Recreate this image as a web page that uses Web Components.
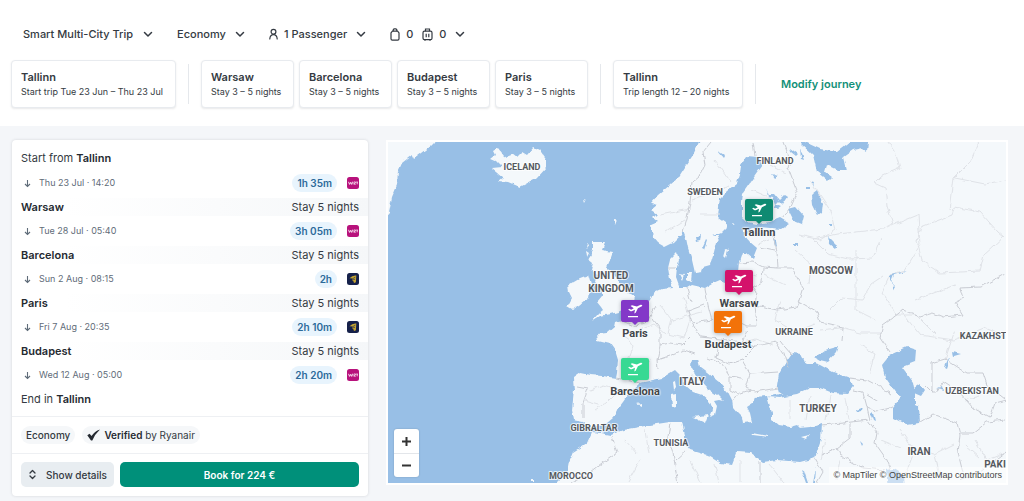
<!DOCTYPE html>
<html lang="en">
<head>
<meta charset="utf-8">
<meta name="viewport" content="width=device-width, initial-scale=1">
<title>Multi-city trip</title>
<style>
  html { height: 100%; }
  body {
    margin: 0; min-height: 100%; background: #f4f6f9; color: #343a42;
    font-family: Inter, "Open Sans", sans-serif; font-size: 11px; line-height: 16px;
  }
</style>
</head>
<body>
<trip-page></trip-page>

<template id="trip-page">
  <style>
    :host { display: block; }
    header { background: #fff; padding: 24px 12px 18px 11px; }
    .options { display: flex; align-items: center; gap: 24px; height: 20px; padding-left: 12px; }
    .route { display: flex; align-items: center; gap: 12px; margin-top: 16px; }
    .stops { display: flex; gap: 5px; }
    hr { width: 1px; height: 40px; margin: 0; border: 0; background: #e5e8ec; }
    .route a { margin-left: 13px; color: #129078; font-size: 11px; font-weight: 600; text-decoration: none; }
    main { display: grid; grid-template-columns: 356px minmax(0, 1fr); gap: 18px; align-items: start; padding: 14px 16px 5px 12px; }
  </style>
  <header>
    <form class="options">
      <option-select label="Trip type" options="Smart Multi-City Trip|One way|Return"></option-select>
      <option-select label="Cabin class" options="Economy|Business|First"></option-select>
      <option-menu label="Passengers"><ui-icon name="person"></ui-icon>1 Passenger</option-menu>
      <option-menu label="Bags"><ui-icon name="bag"></ui-icon>0<ui-icon name="case"></ui-icon>0</option-menu>
    </form>
    <nav class="route" aria-label="Journey">
      <stop-card style="--w:165px" city="Tallinn">Start trip Tue 23 Jun – Thu 23 Jul</stop-card>
      <hr>
      <div class="stops">
        <stop-card city="Warsaw">Stay 3 – 5 nights</stop-card>
        <stop-card city="Barcelona">Stay 3 – 5 nights</stop-card>
        <stop-card city="Budapest">Stay 3 – 5 nights</stop-card>
        <stop-card city="Paris">Stay 3 – 5 nights</stop-card>
      </div>
      <hr>
      <stop-card style="--w:130px" city="Tallinn">Trip length 12 – 20 nights</stop-card>
      <hr>
      <a href="#modify">Modify journey</a>
    </nav>
  </header>
  <main>
    <itinerary-card></itinerary-card>
    <trip-map></trip-map>
  </main>
</template>

<template id="option-select">
  <style>
    :host { display: inline-flex; align-items: center; gap: 9px; }
    select { appearance: none; border: 0; padding: 0; margin: 0; background: none; color: inherit; font: 500 11px/20px Inter, sans-serif; }
  </style>
  <select></select><ui-icon name="chevron"></ui-icon>
</template>

<template id="option-menu">
  <style>
    :host { display: inline-flex; }
    button { display: flex; align-items: center; gap: 9px; border: 0; padding: 0; background: none; color: inherit; font: 500 11px/20px Inter, sans-serif; }
    span { display: flex; align-items: center; gap: 6px; }
    ::slotted(ui-icon[name="case"]) { margin-left: 3px; }
  </style>
  <button type="button" aria-haspopup="true"><span><slot></slot></span><ui-icon name="chevron"></ui-icon></button>
</template>

<template id="stop-card">
  <style>
    :host { display: block; box-sizing: border-box; width: var(--w, 93px); height: 48px; padding: 8px 0 0 9px; border: 1px solid #e8ebef; border-radius: 4px; background: #fff; box-shadow: 0 1px 2px rgba(37,42,49,.1); white-space: nowrap; }
    strong { display: block; font-size: 11px; line-height: 16px; font-weight: 600; }
    small { display: block; font-size: 9px; line-height: 13px; color: #343a42; }
  </style>
  <strong></strong><small><slot></slot></small>
</template>

<template id="itinerary-card">
  <style>
    :host { display: block; background: #fff; border-radius: 4px; box-shadow: 0 0 3px rgba(37,42,49,.16); }
    .legs { padding: 9px 0 8px; }
    .end { height: 18px; padding: 0 9px; line-height: 18px; }
    .start { height: 19px; }
    strong { font-weight: 600; color: #252a31; }
    .tags { display: flex; align-items: center; gap: 7px; height: 36px; padding: 0 9px; border-top: 1px solid #eef0f3; }
    .tag { display: flex; align-items: center; gap: 4px; height: 18px; padding: 0 5px; border-radius: 9px; background: #f5f7f9; font-size: 10px; }
    .tag.cabin { font-weight: 500; }
    .actions { display: flex; gap: 6px; padding: 8px 9px 9px; border-top: 1px solid #eef0f3; }
    button { display: flex; align-items: center; justify-content: center; height: 25px; border: 0; border-radius: 5px; padding: 0; font: 600 10px/16px Inter, sans-serif; }
    .details { gap: 9px; width: 93px; background: #e8edf1; color: #343a42; font-weight: 500; }
    .book { flex: 1; background: #00907a; color: #fff; }
  </style>
  <div class="legs">
    <div class="end start">Start from <strong>Tallinn</strong></div>
    <flight-leg when="Thu 23 Jul · 14:20" airline="wizz">1h 35m</flight-leg>
    <city-stay city="Warsaw">Stay 5 nights</city-stay>
    <flight-leg when="Tue 28 Jul · 05:40" airline="wizz">3h 05m</flight-leg>
    <city-stay city="Barcelona">Stay 5 nights</city-stay>
    <flight-leg when="Sun 2 Aug · 08:15" airline="ryanair">2h</flight-leg>
    <city-stay city="Paris">Stay 5 nights</city-stay>
    <flight-leg when="Fri 7 Aug · 20:35" airline="ryanair">2h 10m</flight-leg>
    <city-stay city="Budapest">Stay 5 nights</city-stay>
    <flight-leg when="Wed 12 Aug · 05:00" airline="wizz">2h 20m</flight-leg>
    <div class="end">End in <strong>Tallinn</strong></div>
  </div>
  <div class="tags">
    <span class="tag cabin">Economy</span>
    <span class="tag"><ui-icon name="check"></ui-icon><span><strong>Verified</strong> by Ryanair</span></span>
  </div>
  <div class="actions">
    <button class="details" type="button"><ui-icon name="expand"></ui-icon>Show details</button>
    <button class="book" type="button">Book for 224 €</button>
  </div>
</template>

<template id="flight-leg">
  <style>
    :host { display: flex; align-items: center; height: 30px; padding: 0 9px; color: #5f6c79; font-size: 10px; }
    ui-icon { margin: 0 7px 0 2px; }
    time { flex: 1; font-size: 9px; }
    .duration { height: 18px; padding: 0 5px; border-radius: 9px; background: #e8f4fd; color: #2c6a9a; font-weight: 600; line-height: 18px; }
    ui-icon.airline { margin: 0 0 0 10px; }
  </style>
  <ui-icon name="down"></ui-icon><time></time><span class="duration"><slot></slot></span><ui-icon class="airline"></ui-icon>
</template>

<template id="city-stay">
  <style>
    :host { display: flex; justify-content: space-between; height: 18px; padding: 0 9px; line-height: 18px; background: linear-gradient(90deg, #fff 15%, #f5f7f9); }
    strong { font-weight: 600; color: #252a31; }
  </style>
  <strong></strong><span><slot></slot></span>
</template>

<template id="map-pin">
  <style>
    :host { display: flex; position: absolute; flex-direction: column; align-items: center; width: 80px; margin-left: -40px; }
    svg { display: block; filter: drop-shadow(0 1px 2px rgba(40,50,60,.35)); }
    span { margin-top: 1px; color: #41464b; font: 700 11px/13px Roboto, sans-serif; text-shadow: 0 0 2px #fff, 0 0 2px #fff, 0 0 2px #fff; }
  </style>
  <svg width="28" height="26" viewBox="0 0 28 26" aria-hidden="true">
    <path fill="var(--c)" d="M2 0h24q2 0 2 2v18q0 2-2 2h-9l-3 3-3-3H2q-2 0-2-2V2Q0 0 2 0z"/>
    <path fill="#fff" d="M7 16h10v1.200H7zM7.200 9.400l1-.6 2 .9 2.600-1.400-3.200-2.400 1.400-.7 4.900 1.400 3.200-1.700c1-.4 1.900-.3 2.100.3s-.3 1.200-1.300 1.600l-3 1.500-2.200 4.400-1.400.7.700-3.700-2.700 1.300c-.9.400-1.700.4-2.200-.1z"/>
  </svg>
  <span><slot></slot></span>
</template>

<template id="trip-map">
  <style>
    :host { display: block; position: relative; height: 341px; border: 2px solid #fff; overflow: hidden; background: #98bfe6; }
    .world { display: block; width: 100%; height: 100%; }
    text { font-family: Roboto, sans-serif; font-weight: 700; fill: #55595e; stroke: #fff; stroke-opacity: .75; stroke-width: 2px; stroke-linejoin: round; paint-order: stroke; }
    .s { font-size: 9px; } .m { font-size: 10px; }
    .zoom { position: absolute; left: 6px; bottom: 6px; display: grid; width: 25px; border-radius: 3px; background: #fff; box-shadow: 0 0 2px rgba(0,0,0,.2); }
    .zoom button { display: grid; place-items: center; height: 24px; border: 0; padding: 0; background: none; color: #333; }
    .zoom button + button { border-top: 1px solid #e3e6ea; }
    .credit { position: absolute; right: 0; bottom: 0; padding: 0 4px; background: rgba(255,255,255,.5); font: 9px/16px "Liberation Sans", sans-serif; white-space: nowrap; }
    .credit a { color: #444; text-decoration: none; }
  </style>
  <svg class="world" viewBox="388 142 618 341" preserveAspectRatio="xMinYMin slice" role="img" aria-label="Map of Europe">
    <defs>
      <filter id="rough" filterUnits="userSpaceOnUse" x="370" y="125" width="660" height="380" color-interpolation-filters="sRGB">
        <feTurbulence type="fractalNoise" baseFrequency=".18" numOctaves="1" seed="4"/>
        <feDisplacementMap in="SourceGraphic" scale="5" xChannelSelector="R" yChannelSelector="G"/>
        <feGaussianBlur stdDeviation=".35"/>
      </filter>
    </defs>
    <g filter="url(#rough)">
      <g fill="#f4f8fb">
        <path d="M380 130H440L435 142 430 147 422 153 414 159 412 155 402 163 398 172 397 185 392 197 389 212 380 222z"/>
        <path d="M490 159l5-4-2-4 5-3 6 8 4 3 4-6 5 4 5-5 5 3 7-8 6 3 7 10v7l-10 11-17 9-12-5-10-1 5-4-11-9 10-1-5-5z"/>
        <path d="M593 242h12l-3 8 11 2-3 8-3 7 6 6 7 10 7 10 8 3-1 6-6 5-10 5-8 2-10 2-8 5 6-7 5-4-2-3-4-5 5-6 0-9-6-5 2-8-7-3 2-8-5-4 5-8z"/>
        <path d="M587 243l2 2-3 4zM586 251l3 2-2 4zM568 285l12-7 8-3 3 10-2 13-9 7-8 5-5-3 5-9-3-6z"/>
        <path d="M702 130L699 142 693 155 685 167 678 178 670 185 658 195 651 203 657 205 651 210 657 214 653 218 658 222 651 225 653 237 658 243 665 247 673 243 681 235 683 230 686 238 688 248 692 260 695 273 702 272 703 267 710 265 713 255 716 243 722 233 727 228 725 222 718 217 719 207 720 198 728 190 737 183 740 175 741 165 747 156 757 157 763 165 757 173 750 183 743 193 742 203 742 217 747 222 757 224 770 222 780 218 790 224 782 229 770 228 760 227 750 230 746 237 750 242 757 248 753 258 747 253 742 253 739 262 738 272 733 278 725 282 720 280 713 283 705 288 692 285 687 288 680 288 676 277 677 267 679 260 677 253 670 260 668 268 670 280 673 288 662 289 653 293 650 300 640 310 630 316 622 320 615 322 614 327 607 333 597 334 598 340 610 343 615 350 618 360 617 373 616 378 603 376 590 375 580 373 573 378 574 390 572 410 574 420 583 422 590 428 598 425 607 423 613 418 617 410 623 402 630 392 640 383 653 380 662 378 670 373 675 370 680 375 685 385 693 392 702 395 710 402 713 410 710 417 715 415 717 406 714 401 719 400 723 401 717 395 707 388 697 377 691 367 692 360 698 359 700 367 708 373 720 383 728 392 732 400 733 407 738 413 742 417 743 423 752 422 750 413 747 407 753 403 755 397 767 396 769 403 772 413 772 420 778 425 790 427 797 425 800 428 810 427 822 423 821 440 815 458 820 500 1030 500 1030 130z"/>
        <path d="M592 432L587 443 573 452 569 462 567 473 558 482 550 500H830L815 458 800 462 777 460 763 462 750 453 737 452 732 465 720 463 707 455 690 450 684 442 685 435 682 422 670 422 650 425 623 430 610 435 600 433z"/>
        <path d="M673 382l2-1 1 6-2 3zM671 394l5-1v13l-4 1zM692 417l16-2-3 8zM752 433l16 3v1l-15-2zM801 437l8-2-3 4zM637 404l4-1v3zM679 274l5 1-2 5zM687 273l6 0-1 9-5-3zM724 256l2-7 2 1-2 8zM744 235l6 0-4 4zM732 223l3 1-2 1zM743 229h4v3h-4zM584 200l2 1-1 2zM614 220l3 0-2 5zM532 479h3v2h-3z"/>
      </g>
      <g fill="#98bfe6">
        <path d="M801 130L805 142 820 149 837 152 850 142 855 130H872L868 142 867 152 862 148 853 150 843 157 846 170 837 170 827 165 825 172 832 177 828 181 817 172 813 155 800 143z"/>
        <path d="M777 385L779 374 787 360 792 353 800 354 803 360 808 363 814 363 820 365 833 372 850 378 853 387 847 394 833 393 820 388 810 388 797 394 785 396 779 392z"/>
        <path d="M815 357l10-7 14-4-2 6-9 10-8-2zM767 397l12-3 10 2-10 2z"/>
        <path d="M882 365L890 355 907 347 916 350 915 362 902 367 908 375 913 382 915 393 915 405 919 407 920 423 907 425 893 418 893 407 900 398 892 387 885 377z"/>
        <path d="M914 388l6-4 5 6-4 6-7-3zM788 209l8-2 8 9-2 8-8-3zM812 195l5-4 6 12-1 9-4 3-5-10zM828 236l4 4 5 5-2 3-6-5zM806 187h4v2h-4zM811 182l4 1-1 3zM829 223h3v2h-3zM695 237l6-3-1 7-4 1zM702 249l4-9 1 1-3 9zM713 236l10-3-2 3z"/>
        <path d="M773 239l3 1 1 8-2-2zM793 244h5v2h-5zM764 187l3 3 1 7 5 1 2 6 3-3 4 4 5-8-3-2-5 5-5-6-5 0-3-5zM775 204l7 3-4 3-4-2zM771 174l6 2-3 2zM718 151l6 4-1 2zM790 148l8 6-2 2-5-4zM800 148l4 12-3-1zM890 276l4-3 14-2-14 4-3 8 4 4-3 5 1-8-3-3zM856 410l6-2-1 3-4 1zM870 413l3 1 2 8-2-1zM944 367l4-9 1 1-3 9zM953 352l8 2-7 2zM937 388l5-2 1 4zM860 441l3 3-1 2zM886 470l8-1 10 6 1 15H888zM801 469l3 2 4 12h-2zM816 467l-1 16h-2z"/>
      </g>
      <g fill="none" stroke="#e0e3e8" stroke-width="1">
        <path d="M888 142l8 12 4 14-20 9-6 6 11 5 2 18 6 18-10 5-45 5-25 5 15 15 20 5 25-1 8-20M950 210l4-32 16-16 9-20M955 178l30 6 20-4M954 207l26 5 18 20 6 5-20 18-4 16-40 2-18-12-5-20 4-14 31-12zM893 225l25-10 2 30-15 25-15 5-8 18 14 22 20 0 20 20M830 310l12-12 20 2 9-16 12-8M856 250v60l20 10M820 330l20-2 20 5 22 0M810 180l20 30 5 20-15 10-20-5M795 250l16 14-2 20M780 300l-5 20 20 12 20-8M860 345l14 8-4 20M900 310l20 25 34 5 30-12 20 8M915 300l40-15M945 360l10-30"/>
        <path d="M660 305l12 15-4 14 16 4 6-18-6-22M672 320l30-8M640 330l14-6 12 10M625 335l8 12-6 16 18 4 8-10M700 215h20M692 200l20-6 16-8M660 215l30-6M665 232l20-12M715 160l16 22M770 165l16 8M752 190l14 6M720 300l16 8M735 345l20-6 18 6M590 390l14-5 14 4M595 410l12-8 8-8M585 400l14 4M790 400v20M810 395l-4 25M830 396l-4 24M845 398l4 22M625 440l12 14M645 430l4 24M690 460l10 22M715 465l4 18M740 460v22M770 465l14 18M640 460l-12 22M900 430l14 20 20 4 20-10M915 450l-10 25M935 455l6 25M880 440l20 8M965 445l14 12M975 440l12 20 20-8M965 400l14-4M825 440l-4 20M840 460l-4 20M690 375l12 8M740 270l16 6M765 275l20 10M770 240l-12 4"/>
      </g>
      <g fill="none" stroke="#c9ccd3" stroke-width="1">
        <path d="M711 142l-8 10 2 13-5 10-8 7-2 20-3 16-4 14M753 142l2 14M783 142l7 18-2 8 9 24-7 16-8 10M772 232l5 20 1 16-15-1-10-5-14 1M760 247l15 3M763 268l-1 14-9 5-14-7M778 268h14l11 19-6 20-20 3-22-5 2-13-4-5M797 307l3-5 17 10 3 10 23 5-1 15M705 288l3 17 4 15 14-4 20 10 11 0-2-21M712 320l-20 3-4-12 16-6M692 323l8 14 20 2 22 3 6-12M652 318l8 10 0 17-3 15 1 10M660 345l10-2 12 2 8-8M657 360l12-4 14-6 12 4M742 342l14 4 20-4 8 12 4 14M756 346l-14 14-12 4-14-6 4-17M778 372l-28 2-8-14M750 374l-4 14 8 4 24-4M742 378l-12-2-8-12-14-6M730 376l0 14 8 4 12-4M738 394l-6 8M620 320l14 6 14-6 8-14M668 268h8M687 288l4 14M779 340l12 14"/>
        <path d="M577 387l11 2-5 14v15M616 378l24 5M612 437l5 16-14 10-13 10-10 5-12 6M670 423l-2 14 5 16 5 32M687 450l-11 10M760 462v30M822 425l21-2 25-3 9 13-2 10 12 17 4 10M850 423v15l-13 10-15 7M837 448l3 7 23 13 22 2M815 458l8 14-8 14M850 378l17 2 13 7 12 8M853 390l10 2 4 15 3 13M867 407l10 4 16-4M867 395l10 6M890 352l-10-15 3-12 7-5 13-10 17 7 13-4 10 4 20-2-8-13 8-4-3-10 20-1 25-13M932 392v-29l13-4 22 14 16 0 4 12M925 385l7 7h5l6-10 17 11 13 15 17 9 5-14 12-3M987 385l18 14M920 422l13-8 24 9 3 12-2 18 5 20M960 433h13l14-11 18-2M960 480l20-8 26-20"/>
      </g>
    </g>
    <g text-anchor="middle">
      <g class="s">
        <text x="522" y="170">ICELAND</text><text x="775" y="164">FINLAND</text><text x="705" y="195">SWEDEN</text>
        <text x="794" y="335">UKRAINE</text><text x="671" y="446">TUNISIA</text><text x="594" y="431">GIBRALTAR</text>
        <text x="571" y="479">MOROCCO</text><text x="972" y="394">UZBEKISTAN</text><text x="983" y="339">KAZAKHST</text>
      </g>
      <g class="m">
        <text x="611" y="279">UNITED</text><text x="611" y="292">KINGDOM</text><text x="831" y="274">MOSCOW</text>
        <text x="692" y="385">ITALY</text><text x="818" y="412">TURKEY</text><text x="919" y="455">IRAN</text><text x="995" y="468">PAKI</text>
      </g>
    </g>
  </svg>
  <map-pin style="left:371px;top:57px;--c:#0f8a72">Tallinn</map-pin>
  <map-pin style="left:351px;top:128px;--c:#d4126b">Warsaw</map-pin>
  <map-pin style="left:247px;top:158px;--c:#8338c8">Paris</map-pin>
  <map-pin style="left:340px;top:169px;--c:#f27209">Budapest</map-pin>
  <map-pin style="left:247px;top:216px;--c:#37d993">Barcelona</map-pin>
  <div class="zoom">
    <button type="button" aria-label="Zoom in"><svg width="9" height="9" viewBox="0 0 9 9"><path d="M4.500 0v9M0 4.500h9" stroke="currentColor" stroke-width="2"/></svg></button>
    <button type="button" aria-label="Zoom out"><svg width="9" height="9" viewBox="0 0 9 9"><path d="M0 4.500h9" stroke="currentColor" stroke-width="2"/></svg></button>
  </div>
  <div class="credit"><a href="#maptiler">© MapTiler</a> <a href="#osm">© OpenStreetMap contributors</a></div>
</template>

<script>
  const icons = {
    chevron: [10, 10, '<path d="M1.500 3.500l3.500 3.500 3.500-3.500" fill="none" stroke="currentColor" stroke-width="1.500" stroke-linecap="round" stroke-linejoin="round"/>'],
    person: [9, 12, '<g fill="none" stroke="currentColor" stroke-width="1.200" stroke-linecap="round"><circle cx="4.500" cy="3.700" r="2.400"/><path d="M.8 11c.2-2.800 1.600-4.300 3.700-4.300s3.500 1.500 3.700 4.300"/></g>'],
    bag: [10, 13, '<g fill="none" stroke="currentColor" stroke-width="1.200" stroke-linejoin="round"><path d="M3.200 3.200V2q0-1.200 1.100-1.200h1.400q1.100 0 1.100 1.200v1.200"/><path d="M2.400 3.200h5.200l1.400 1.600v6q0 1.300-1.300 1.300H2.300Q1 12.100 1 10.800v-6z"/></g>'],
    case: [11, 13, '<g fill="none" stroke="currentColor" stroke-width="1.200"><path d="M3.500 3.200V1h4v2.200"/><rect x="1" y="3.200" width="9" height="8.500" rx="1.500"/><path d="M4.200 5.700v3.600M6.800 5.700v3.600M3 11.700v1M8 11.700v1"/></g>'],
    down: [9, 9, '<path d="M4.500 1v6.500M2 5l2.500 2.500L7 5" fill="none" stroke="currentColor" stroke-width="1.100"/>'],
    expand: [9, 11, '<path d="M2 4l2.500-2.500L7 4M2 7l2.500 2.500L7 7" fill="none" stroke="currentColor" stroke-width="1.300" stroke-linecap="round" stroke-linejoin="round"/>'],
    check: [13, 12, '<path d="M.3 6.300l2.300-1.500 1.900 2.300Q7.500 2.300 13 .5 8 5 5.300 11.500H4z" fill="#252a31"/>'],
    wizz: [12, 12, '<rect width="12" height="12" rx="2.500" fill="#b8127c"/><path d="M1.500 4.800l1 2.600 1-2 .9 2 1-2.600M6 4.800v2.600M7 5h1.600L7.200 7.200h1.500M9.300 5h1.500M10.200 5v2.300" fill="none" stroke="#fff" stroke-width=".8"/>'],
    ryanair: [12, 12, '<rect width="12" height="12" rx="2.500" fill="#16214a"/><path d="M2.500 5.200Q5.500 2 9.300 2.500l-.4 6.700-1.900.8Q6.800 8 5 7.200L5.900 5.600z" fill="#c4a432"/><path d="M5.900 5.600l2.400-1.400M5 7.200l3-1" stroke="#16214a" stroke-width=".6"/>']
  };

  class Base extends HTMLElement {
    constructor() {
      super();
      const root = this.attachShadow({ mode: 'open' });
      const template = document.getElementById(this.localName);
      if (template) root.append(template.content.cloneNode(true));
    }
    $(selector) { return this.shadowRoot.querySelector(selector); }
  }

  class UiIcon extends Base {
    static observedAttributes = ['name'];
    attributeChangedCallback() {
      const [w, h, body] = icons[this.getAttribute('name')];
      this.shadowRoot.innerHTML = `<style>:host{display:inline-block;flex:none}svg{display:block}</style><svg width="${w}" height="${h}" viewBox="0 0 ${w} ${h}" aria-hidden="true">${body}</svg>`;
    }
  }
  class OptionSelect extends Base {
    connectedCallback() {
      const select = this.$('select');
      select.setAttribute('aria-label', this.getAttribute('label'));
      select.replaceChildren(...this.getAttribute('options').split('|').map(o => new Option(o)));
    }
  }
  class OptionMenu extends Base {}
  class StopCard extends Base {
    connectedCallback() { this.$('strong').textContent = this.getAttribute('city'); }
  }
  class CityStay extends StopCard {}
  class FlightLeg extends Base {
    connectedCallback() {
      this.$('time').textContent = this.getAttribute('when');
      this.$('.airline').setAttribute('name', this.getAttribute('airline'));
    }
  }
  class MapPin extends Base {}
  class TripMap extends Base {}
  class ItineraryCard extends Base {}
  class TripPage extends Base {}

  customElements.define('ui-icon', UiIcon);
  customElements.define('option-select', OptionSelect);
  customElements.define('option-menu', OptionMenu);
  customElements.define('stop-card', StopCard);
  customElements.define('city-stay', CityStay);
  customElements.define('flight-leg', FlightLeg);
  customElements.define('map-pin', MapPin);
  customElements.define('trip-map', TripMap);
  customElements.define('itinerary-card', ItineraryCard);
  customElements.define('trip-page', TripPage);
</script>
</body>
</html>
